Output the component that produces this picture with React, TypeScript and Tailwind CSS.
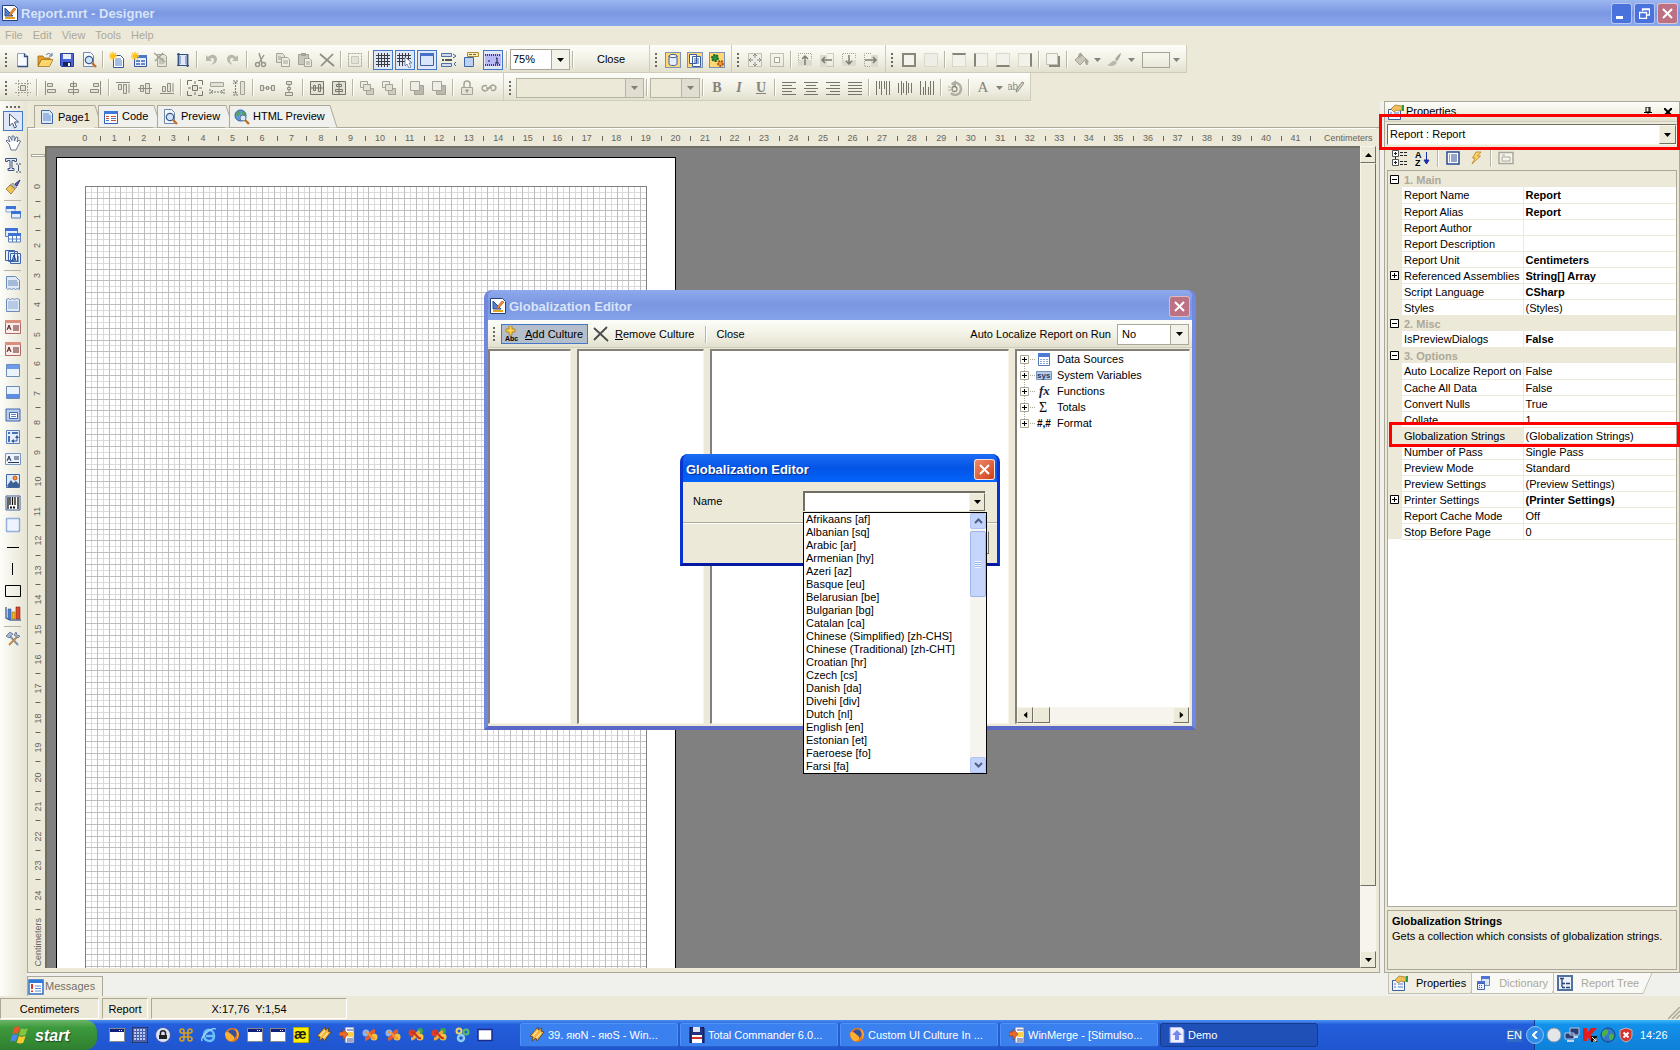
import React from "react";
import clsx from "clsx";

const G = "#a5a396";
const L = "#e4e2d6";
const B = "#3a5f9f";

// Small 16x16 drawings, keyed by command name
const icons: Record<string, React.ReactNode> = {
  app: (
    <>
      <path d="M0.5 0.5h12l3 3v12h-15z" fill="#fff" stroke="#26417a" />
      <path d="M3 3v8h8z" fill="#4f7fd0" stroke="#2a4d94" />
      <path d="M7 9l5-6 2 1-5 6-2 1z" fill="#f08a2c" stroke="#a3561b" strokeWidth=".6" />
      <path d="M3 13h10" stroke="#e6a21d" strokeWidth="2" />
    </>
  ),
  new: (
    <>
      <path d="M2.500 1.500h7l3 3v10h-10z" fill="#f7faff" stroke="#8fa3c4" />
      <path d="M9.500 1.500v3h3v10h-10" fill="none" stroke="#2f4f86" strokeWidth="1.300" />
    </>
  ),
  open: (
    <>
      <path d="M1 4h5l1 2h6v2H4L1 14z" fill="#e4a02c" stroke="#9c6a14" strokeWidth=".8" />
      <path d="M1 14.500L4.500 7.500H16L12.500 14.500z" fill="#ffd66b" stroke="#a8741a" strokeWidth=".8" />
      <path d="M9 3c2-2 4-2 5 0m1-2v3h-3" fill="none" stroke="#4a6d9c" />
    </>
  ),
  save: (
    <>
      <path d="M1.500 1.500h13v13h-12l-1-1z" fill="#4a63d8" stroke="#2b3f9a" />
      <path d="M4 2h8v5H4z" fill="#e8eefc" />
      <path d="M4 10h8v4H4z" fill="#16245c" />
      <path d="M9 11h2v3H9z" fill="#fff" />
    </>
  ),
  preview: (
    <>
      <path d="M2.500 .500h7l3 3v11h-10z" fill="#f4f8ff" stroke="#7187ad" />
      <circle cx="8" cy="8" r="3.700" fill="#cfe4f8" stroke="#3e5c86" strokeWidth="1.200" />
      <path d="M11 11l4 4" stroke="#c0702c" strokeWidth="2.400" />
    </>
  ),
  newPage: (
    <>
      <path d="M4.500 3.500h7l3 3v9h-10z" fill="#fff" stroke="#35569a" />
      <path d="M6 7h6M6 9h7M6 11h7M6 13h7" stroke="#4c7bc9" />
      <path d="M4 0v8M0 4h8M1 1l6 6M7 1L1 7" stroke="#ffc21a" strokeWidth="1.300" />
    </>
  ),
  newForm: (
    <>
      <path d="M3.500 3.500h12v11h-12z" fill="#e8f0ff" stroke="#35569a" />
      <path d="M3 3h13v3H3z" fill="#4a78cf" />
      <path d="M5 9h4M10 9h4M5 12h4M10 12h4" stroke="#3d66b3" strokeWidth="1.500" />
      <path d="M4 0v8M0 4h8M1 1l6 6M7 1L1 7" stroke="#ffc21a" strokeWidth="1.300" />
    </>
  ),
  delPage: (
    <>
      <path d="M4.500 2.500h7l2 2v10h-9z" fill={L} stroke={G} />
      <path d="M6 7h5M6 9h5M6 11h5" stroke={G} />
      <path d="M1 1l11 9M10 1L2 9" stroke={G} strokeWidth="1.500" />
    </>
  ),
  pageSetup: (
    <>
      <path d="M3 2h9v11H3z" fill="#dfe8f8" />
      <path d="M3.500 1v12M12.500 2v13" stroke="#34507f" strokeWidth="1.800" />
      <path d="M2 2.500h11M2 13.500h12" stroke="#34507f" />
      <path d="M5.500 4v8M10.500 4v8" stroke="#9db0d0" />
    </>
  ),
  undo: <path d="M3 3v6h6L7 7c2-2 4-1 4 1s-1 3-3 5c4-1 6-3 6-6 0-4-5-6-9-2z" fill="#bab8ac" />,
  redo: <path d="M13 3v6H7l2-2C7 5 5 6 5 8s1 3 3 5C4 12 2 10 2 7c0-4 5-6 9-2z" fill="#bab8ac" />,
  cut: (
    <>
      <path d="M6 1l3 10M11 3L6 11" stroke="#97958a" strokeWidth="1.400" />
      <circle cx="4.500" cy="12.500" r="2" fill="none" stroke="#97958a" strokeWidth="1.400" />
      <circle cx="10.500" cy="12.500" r="2" fill="none" stroke="#97958a" strokeWidth="1.400" />
    </>
  ),
  copy: (
    <>
      <path d="M1.500 1.500h6l2 2v7h-8z" fill={L} stroke={G} />
      <path d="M6.500 5.500h6l2 2v7h-8z" fill="#efeee6" stroke={G} />
      <path d="M8 9h5M8 11h5M3 5h3M3 7h3" stroke={G} />
    </>
  ),
  paste: (
    <>
      <path d="M1.500 2.500h10v10h-10z" fill="#c9c7bb" stroke={G} />
      <path d="M4 1h5v3H4z" fill={G} />
      <path d="M7.500 6.500h5l2 2v6h-7z" fill="#efeee6" stroke={G} />
      <path d="M9 10h4M9 12h4" stroke={G} />
    </>
  ),
  del: <path d="M1 2l14 12M14 2L2 14" stroke="#8f8d82" strokeWidth="1.700" />,
  cross: <path d="M1 2l14 13M14 1L1 14" stroke="#4a4a4a" strokeWidth="1.800" />,
  selectAll: (
    <>
      <path d="M1.500 1.500h13v13h-13z" fill="none" stroke={G} strokeDasharray="2 1" />
      <path d="M4.500 4.500h7v7h-7z" fill={L} stroke="#c9c7bb" />
    </>
  ),
  grid: <path d="M3.500 1v14M6.500 1v14M9.500 1v14M12.500 1v14M1 3.500h14M1 6.500h14M1 9.500h14M1 12.500h14" stroke="#3a3a42" />,
  snap: (
    <>
      <path d="M2.500 1v13M5.500 1v13M8.500 1v13M11.500 1v9M0 3.500h14M0 6.500h14M0 9.500h14" stroke="#3a3a42" />
      <path d="M8 5v9l2-2 2 4 2-1-2-4h3z" fill="#fff" stroke="#5d74a3" strokeWidth=".8" />
    </>
  ),
  headers: (
    <>
      <path d="M1.500 1.500h13v12h-13z" fill="#d9e6fa" stroke="#3f5f9c" />
      <path d="M1 1h14v3H1z" fill="#4472c8" />
    </>
  ),
  order: (
    <>
      <path d="M.500 1.500h10v3H.500zM.500 11.500h10v3H.500z" fill="#cfdcf2" stroke="#54709f" />
      <path d="M4 8h7M1 8h2" stroke="#222" strokeWidth="1.500" />
      <path d="M12 2l3 2-3 2M15 10l-2 2 2 2" fill="none" stroke={B} />
    </>
  ),
  quickInfo: (
    <>
      <path d="M1.500 5.500h9v9h-9z" fill="#bdd2f3" stroke="#3f66ab" />
      <path d="M4.500 .500h11v4h-11z" fill="#fff2b8" stroke="#a88a37" />
      <path d="M6 2.500h3M10 2.500h3" stroke="#7a6425" />
    </>
  ),
  rulers: (
    <>
      <path d="M0 2h16v12H0z" fill="#b9b9f5" />
      <path d="M0 3h16M0 13h16" stroke="#3a3a96" strokeDasharray="1 1" strokeWidth="2" />
      <path d="M11 6h1v5M10 11h4M3 9h2" stroke="#10103c" fill="none" />
    </>
  ),
  dictSource: (
    <>
      <path d="M0 0h16v16H0z" fill="#ffd873" stroke="#7b93b8" strokeWidth="2" />
      <path d="M4 4v8c0 2 8 2 8 0V4" fill="#e6eefb" stroke={B} />
      <ellipse cx="8" cy="4" rx="4" ry="1.600" fill="#fff" stroke={B} />
    </>
  ),
  dictPages: (
    <>
      <path d="M0 0h16v16H0z" fill="#ffd873" stroke="#7b93b8" strokeWidth="2" />
      <path d="M2.500 2.500h7v9h-7zM5.500 4.500h8v10h-8z" fill="#fff" stroke={B} />
      <path d="M7 7h5M7 9h5M7 11h5" stroke={B} />
    </>
  ),
  dictGears: (
    <>
      <path d="M0 0h16v16H0z" fill="#ffd873" stroke="#7b93b8" strokeWidth="2" />
      <circle cx="6" cy="6" r="3" fill="#2f8f3a" stroke="#1c6b27" strokeWidth="2" strokeDasharray="2 1" />
      <circle cx="11.500" cy="11.500" r="2.500" fill="#f29a2e" stroke="#b2591b" strokeWidth="2" strokeDasharray="2 1" />
    </>
  ),
  move: (
    <>
      <path d="M1.500 1.500h13v13h-13z" fill="#efeee6" stroke="#c3c1b5" />
      <path d="M8 2v4M6 4l2-2 2 2M8 10v4M6 12l2 2 2-2M2 8h4M4 6L2 8l2 2M10 8h4M12 6l2 2-2 2" fill="none" stroke="#8f8d82" />
    </>
  ),
  inner: (
    <>
      <path d="M1.500 1.500h13v13h-13z" fill="none" stroke="#8f8d82" strokeDasharray="1 1" />
      <path d="M5.500 5.500h5v5h-5z" fill="#fff" stroke={G} />
    </>
  ),
  toUp: (
    <>
      <path d="M1 8h14v6H1z" fill="#dddbcf" />
      <path d="M1.500 8V1.500h13V8" fill="none" stroke={G} strokeDasharray="1 1" />
      <path d="M8 13V4M5 7l3-3 3 3" fill="none" stroke="#7f7d72" strokeWidth="1.500" />
    </>
  ),
  toLeft: (
    <>
      <path d="M1 3h7v12H1z" fill="#dddbcf" />
      <path d="M8.500 1.500h6v13h-6" fill="none" stroke={G} strokeDasharray="1 1" />
      <path d="M13 8H3M6 5L3 8l3 3" fill="none" stroke="#7f7d72" strokeWidth="1.500" />
    </>
  ),
  toDown: (
    <>
      <path d="M1 8h14v6H1z" fill="#dddbcf" />
      <path d="M1.500 7V1.500h13V7" fill="none" stroke={G} strokeDasharray="1 1" />
      <path d="M8 3v9M5 9l3 3 3-3" fill="none" stroke="#7f7d72" strokeWidth="1.500" />
    </>
  ),
  toRight: (
    <>
      <path d="M8 3h7v12H8z" fill="#dddbcf" />
      <path d="M8 1.500H1.500v13H8" fill="none" stroke={G} strokeDasharray="1 1" />
      <path d="M2 8h11M10 5l3 3-3 3" fill="none" stroke="#7f7d72" strokeWidth="1.500" />
    </>
  ),
  borderAll: <path d="M2 2h12v12H2z" fill="#f4f3ec" stroke="#8a887c" strokeWidth="2" />,
  borderNone: <path d="M1.500 1.500h13v13h-13z" fill="#efeee6" stroke="#dad8cc" />,
  align: <path d="M1 2.500h14M1 5.500h10M1 8.500h14M1 11.500h10M1 14.500h14" stroke="#77756a" />,
  alignC: <path d="M1 2.500h14M3 5.500h10M1 8.500h14M3 11.500h10M1 14.500h14" stroke="#77756a" />,
  alignR: <path d="M1 2.500h14M5 5.500h10M1 8.500h14M5 11.500h10M1 14.500h14" stroke="#77756a" />,
  alignJ: <path d="M1 2.500h14M1 5.500h14M1 8.500h14M1 11.500h14M1 14.500h14" stroke="#77756a" />,
  vTop: <path d="M1.500 1v14M4.500 1v8M6.500 1v14M9.500 1v8M11.500 1v14M14.500 1v14" stroke="#77756a" />,
  vMid: <path d="M1.500 3v10M4.500 1v14M6.500 3v10M9.500 1v14M11.500 3v10M14.500 3v10" stroke="#77756a" />,
  vBot: <path d="M1.500 1v14M4.500 7v8M6.500 1v14M9.500 7v8M11.500 1v14M14.500 1v14" stroke="#77756a" />,
  alignGrid: (
    <>
      <path d="M3.500 0v16M12.500 0v16M0 3.500h16M0 12.500h16" stroke={G} strokeDasharray="2 1" />
      <path d="M5.500 5.500h5v5h-5z" fill={L} stroke="#8f8d82" />
    </>
  ),
  alLeft: <path d="M2.500 1v14M4.500 3.500h5v3h-5zM4.500 9.500h8v3h-8z" fill={L} stroke="#8f8d82" />,
  alCenter: <path d="M8.500 1v14M5.500 3.500h6v3h-6zM3.500 9.500h10v3h-10z" fill={L} stroke="#8f8d82" />,
  alRight: <path d="M13.500 1v14M6.500 3.500h5v3h-5zM3.500 9.500h8v3h-8z" fill={L} stroke="#8f8d82" />,
  alTop: <path d="M1 2.500h14M3.500 4.500h3v5h-3zM8.500 4.500h3v9h-3zM14 4v9" fill={L} stroke="#8f8d82" />,
  alMiddle: <path d="M1 8.500h14M3.500 5.500h3v6h-3zM8.500 3.500h4v10h-4z" fill={L} stroke="#8f8d82" />,
  alBottom: <path d="M1 13.500h14M3.500 6.500h3v5h-3zM8.500 3.500h3v8h-3zM14 3v9" fill={L} stroke="#8f8d82" />,
  sizeBoth: (
    <>
      <path d="M.500 5V.500H5M11 .500h4.500V5M15.500 11v4.500H11M5 15.500H.500V11M8 1v3M8 12v3M1 8h3M12 8h3" fill="none" stroke="#77756a" />
      <path d="M5.500 5.500h5v5h-5z" fill={L} stroke="#77756a" />
    </>
  ),
  sizeW: (
    <>
      <path d="M1.500 2.500h13v4h-13z" fill={L} stroke={G} />
      <path d="M1 9v5M15 9v5M2 12h12M4 10l-2 2 2 2M12 10l2 2-2 2" fill="none" stroke="#77756a" strokeDasharray="2 1" />
    </>
  ),
  sizeH: (
    <>
      <path d="M9.500 1.500h4v13h-4z" fill={L} stroke={G} />
      <path d="M2 1h5M2 15h5M4.500 2v12M2 4l2.500-2L7 4M2 12l2.500 2L7 12" fill="none" stroke="#77756a" strokeDasharray="2 1" />
    </>
  ),
  spaceH: <path d="M1.500 5.500h3v5h-3zM7.500 6.500h2v3h-2zM12.500 5.500h3v5h-3zM5 8h2M10 8h2" fill={L} stroke="#8f8d82" />,
  spaceV: <path d="M5.500 1.500h5v3h-5zM6.500 7.500h3v2h-3zM4.500 12.500h7v3h-7zM8 5v2M8 10v2" fill={L} stroke="#8f8d82" />,
  centerH: <path d="M1.500 1.500h13v13h-13zM1 8h14M4.500 5.500h2v5h-2zM9.500 4.500h2v7h-2z" fill={L} stroke="#77756a" />,
  centerV: <path d="M1.500 1.500h13v13h-13zM8 1v14M5.500 4.500h5v2h-5zM4.500 9.500h7v2h-7z" fill={L} stroke="#77756a" />,
  layers: (
    <>
      <path d="M1.500 1.500h7v6h-7z" fill="#efeee6" stroke={G} />
      <path d="M7.500 8.500h7v6h-7z" fill="#cfcdc1" stroke={G} />
      <path d="M4.500 4.500h7v6h-7z" fill={L} stroke={G} />
    </>
  ),
  layers2: (
    <>
      <path d="M5.500 5.500h9v9h-9z" fill="#bab8ac" stroke={G} />
      <path d="M1.500 1.500h9v9h-9z" fill="#efeee6" stroke={G} />
    </>
  ),
  lock: (
    <>
      <path d="M5 7V4c0-4 6-4 6 0v3" fill="none" stroke={G} strokeWidth="1.500" />
      <path d="M2.500 7.500h11v7h-11z" fill={L} stroke={G} />
      <path d="M8 9v4M6.500 10.500h3" stroke="#8f8d82" />
    </>
  ),
  link: <path d="M6 6c-5-2-7 4-2 5 2 0 4-3 4-3s2-3 4-3c5 1 3 7-2 5M5 8h6" fill="none" stroke={G} strokeWidth="1.500" />,
  shadow: (
    <>
      <path d="M4 4h11v11H4z" fill="#8a887c" />
      <path d="M1.500 1.500h11v11h-11z" fill="#f4f3ec" stroke="#c3c1b5" />
    </>
  ),
  bucket: (
    <>
      <path d="M2 8l6-6 5 5-6 6z" fill="#c9c7bb" stroke={G} />
      <path d="M6 6c-1-6 3-6 3-2M13 7c3 1 2 4 1 6-2-2-2-4-1-6z" fill="#aaa89c" stroke={G} />
    </>
  ),
  brushGray: (
    <>
      <path d="M15 1c-2 1-5 4-6 7l2 1c2-2 4-6 4-8z" fill="#aaa89c" />
      <path d="M9 9c-3-1-4 3-8 4 4 2 9 1 10-3z" fill="#bab8ac" />
    </>
  ),
  rotate: (
    <>
      <path d="M5 4c4-3 9 0 9 5s-6 8-10 4" fill="none" stroke="#b2b0a4" strokeWidth="2.500" />
      <path d="M9 0L4 4l5 4z" fill="#b2b0a4" />
      <circle cx="7.500" cy="9" r="2.500" fill="none" stroke="#8f8d82" strokeWidth="1.300" />
      <path d="M1 7h3M1 10h3" stroke="#b2b0a4" />
    </>
  ),
  abPen: (
    <>
      <text x="-1" y="10" fontSize="10" fontFamily="Liberation Sans" fill="#8f8d82">ab</text>
      <path d="M16 3l-6 8-2 1 1-3 5-7z" fill="#d6d4c8" stroke="#8f8d82" />
    </>
  ),
  bandData: (
    <>
      <path d="M1 2h9v5H1z" fill="#e4eefc" stroke="#8aa6d6" />
      <path d="M1 1h10v3H1zM6 6h10v3H6z" fill="#3d72d6" />
      <path d="M6.500 9v4h9V9" fill="#e4eefc" stroke="#5b7fbd" />
    </>
  ),
  bandTable: (
    <>
      <path d="M.500 1.500h12v8H.500z" fill="#e4eefc" stroke="#5b7fbd" />
      <path d="M0 1h13v3H0zM3 6h13v3H3z" fill="#3d72d6" />
      <path d="M3.500 9v6h12V9M7.500 9v6M11.500 9v6M3 12h13" fill="#fff" stroke="#5b7fbd" />
    </>
  ),
  bandA: (
    <>
      <path d="M.500 1.500h9v10h-9zM3.500 2.500h9v10h-9zM5.500 4.500h10v10h-10z" fill="#e4eefc" stroke="#3f66ab" />
      <path d="M7 12l2-6 2 6M8 10h2M12 8h2M12 10h2M12 12h2" stroke="#244b91" fill="none" />
    </>
  ),
  pageTitle: (
    <>
      <path d="M1.500 1.500h9l4 4v9l-2-1-2 1-2-1-2 1-2-1-2 1-1-1z" fill="#dfe9f8" stroke="#6d8bb8" />
      <path d="M3 6h9M3 8h10M3 10h10" stroke="#6d8bb8" />
    </>
  ),
  pageSum: (
    <>
      <path d="M1.500 2.500l2-1 2 1 2-1 2 1 2-1 3 1v12h-13z" fill="#dfe9f8" stroke="#6d8bb8" />
      <path d="M3 5h10M3 7h10M3 9h10M3 11h10" stroke="#8fa9d0" />
    </>
  ),
  redBand: (
    <>
      <path d="M.500 1.500h15v13H.500z" fill="#fbeceb" stroke="#b06a62" />
      <path d="M0 1h16v3H0z" fill="#d98f7e" />
      <path d="M2 11l2-5 2 5M3 9h2M8 7h6M8 9h6M8 11h6" stroke="#5a2420" fill="none" />
    </>
  ),
  winTop: (
    <>
      <path d="M1.500 1.500h13v12h-13z" fill="#eaf2fd" stroke="#6d8bb8" />
      <path d="M2 2h12v4H2z" fill="#6c9cea" />
    </>
  ),
  winBottom: (
    <>
      <path d="M1.500 1.500h13v12h-13z" fill="#eaf2fd" stroke="#6d8bb8" />
      <path d="M2 9h12v4H2z" fill="#5c8ee6" />
    </>
  ),
  winList: (
    <>
      <path d="M1 2h14v12H1z" fill="#b9cdec" stroke="#3f66ab" />
      <path d="M4.500 5.500h8v6h-8z" fill="#fff" stroke="#3f66ab" />
      <path d="M6 7.500h5M6 9.500h5" stroke="#5b7fbd" />
    </>
  ),
  crossTab: (
    <>
      <path d="M1.500 1.500h13v13h-13z" fill="#e4eefc" stroke="#5b7fbd" />
      <path d="M3 3h2v2H3zM7 3h6v2H7zM3 7h2v6H3z" fill="#4472b8" />
      <path d="M8 12h4V8" stroke="#33558f" fill="none" />
      <path d="M6 12l3-2v4zM12 6l-2 3h4z" fill="#33558f" />
    </>
  ),
  textBox: (
    <>
      <path d="M.500 2.500h15v11H.500z" fill="#eef4fd" stroke="#7e97c0" />
      <path d="M2 10l2-5 2 5M3 8h2M9 6h5M9 8h5M3 11.500h11" stroke="#26385c" fill="none" />
    </>
  ),
  image: (
    <>
      <path d="M1.500 1.500h13v13h-13z" fill="#dcebfb" stroke="#4466a0" />
      <circle cx="10" cy="5" r="2" fill="#f09a3c" stroke="#c2571f" />
      <path d="M2 13l4-6 4 6zM8 10l3-2 3 3v3H2z" fill="#3d5f97" />
    </>
  ),
  barcode: (
    <>
      <path d="M1 1h14v14H1z" fill="#fff" stroke="#3d5f97" />
      <path d="M3 2v12M5 2v8M7.500 2v8M10 2v8M13 2v12" stroke="#111" strokeWidth="1.300" />
      <path d="M5 12.500h6" stroke="#111" strokeWidth="2" strokeDasharray="2 1" />
    </>
  ),
  dashBox: <path d="M1.500 1.500h13v13h-13z" fill="#edf4fe" stroke="#3d6bc4" strokeDasharray="1 1" strokeWidth="1.500" />,
  hLine: <path d="M2 8.500h12" stroke="#000" />,
  vLine: <path d="M7.500 2v12" stroke="#000" />,
  rect: <path d="M.500 2.500h15v11H.500z" fill="none" stroke="#000" />,
  chart: (
    <>
      <path d="M1 2v11l4 2h11" fill="none" stroke="#5470a0" strokeWidth="1.500" />
      <path d="M3 4h3v10H3z" fill="#4a83d8" stroke="#2b549b" strokeWidth=".6" />
      <path d="M7 7h3v7H7z" fill="#f3b62b" stroke="#9d6c10" strokeWidth=".6" />
      <path d="M11 2h4v12h-4z" fill="#d84a2c" stroke="#8c2411" strokeWidth=".6" />
    </>
  ),
  tools: (
    <>
      <path d="M3 3l10 11" stroke="#7e93b5" strokeWidth="2" />
      <path d="M13 5L4 14" stroke="#c08a48" strokeWidth="2" />
      <path d="M1 5l4-4 3 2-4 4zM11 1l1 3 3 1-2 2-4-3z" fill="#a9b8d0" stroke="#4f6388" strokeWidth=".7" />
    </>
  ),
  arrow: <path d="M4.500 1v12l3-3 2 5 2-1-2-5h4z" fill="#fff" stroke="#3f5680" />,
  hand: <path d="M4 9L1 6l1-1 3 2-2-5 2-.500 2 4V1h2l.500 5L11 2l2 .500L12 7l2-2 1.500 1L13 11l-2 4H6z" fill="#fff" stroke="#3f5680" strokeWidth=".8" />,
  textTool: <path d="M.500 1.500h11v3h-2v-1H7v8h2v2H3v-2h2v-8H2.500v1h-2zM11 7h2m1 0h2M11 15h2m1 0h2M13.500 8v6" fill="#e3ebf8" stroke="#3f5680" />,
  brush: (
    <>
      <path d="M15 1l-5 4 2 2z" fill="#5d5fb0" stroke="#33367c" />
      <path d="M8 4l4 4-2 2-5-4z" fill="#aeb3bd" stroke="#6a6f7c" strokeWidth=".6" />
      <path d="M5 6l5 4-4 5-5-5z" fill="#ecc45a" stroke="#99742a" strokeWidth=".8" />
    </>
  ),
  page: (
    <>
      <path d="M2.500 1.500h8l3 3v10h-11z" fill="#dce9fb" stroke="#3f66ab" />
      <path d="M4 5h6M4 7h8M4 9h8M4 11h8" stroke="#5c86cb" />
    </>
  ),
  code: (
    <>
      <path d="M1.500 2.500h13v12h-13z" fill="#fff" stroke="#3263b8" />
      <path d="M1 2h14v3H1z" fill="#3f78d8" />
      <path d="M3 7.500h3M8 7.500h5M3 9.500h3M8 11.500h5" stroke="#d24a3c" />
      <path d="M8 9.500h5M3 11.500h3" stroke="#3f78d8" />
    </>
  ),
  htmlPreview: (
    <>
      <circle cx="6.500" cy="6.500" r="5.500" fill="#5c9be0" stroke="#2b5a9c" />
      <path d="M3 3c3-2 4 0 3 2s-3 1-4 3M8 2c3 1 4 3 3 5s-3-1-3-5z" fill="#54a84a" />
      <circle cx="9" cy="9" r="3" fill="#d8eafa" stroke="#5f7392" />
      <path d="M11 11l4 4" stroke="#c0702c" strokeWidth="2.400" />
    </>
  ),
  properties: (
    <>
      <path d="M.500 5.500h12v10H.500z" fill="#f2f6fd" stroke="#3f5f9c" />
      <path d="M2 9h2M2 12h2M6 9h5M6 12h5" stroke="#5b7fbd" />
      <path d="M3 5l4-4 7 1v4l-3 1-2-1-3 2z" fill="#f0bf5b" stroke="#99702a" strokeWidth=".7" />
      <path d="M14 1h2v6h-2z" fill="#2f9a48" />
    </>
  ),
  dictionary: (
    <>
      <path d="M6.500 1.500h8v9h-8z" fill="#dce6fb" stroke="#6d86c4" />
      <path d="M6 1h9v3H6zM2 6h8v3H2z" fill="#4d74d4" />
      <path d="M2.500 8.500h7v6h-7z" fill="#eaf0fc" stroke="#4561a6" />
      <path d="M4 10.500h4M4 12.500h4" stroke="#4561a6" strokeDasharray="1 1" />
    </>
  ),
  reportTree: (
    <>
      <path d="M1 1h14v14H1z" fill="#eaf1fa" stroke="#52719f" strokeWidth="2" />
      <path d="M3 3.500h4M5 4v8M5 8.500h3M5 12.500h3M9 8.500h4M9 12.500h4" stroke="#2a4271" strokeWidth="1.300" fill="none" />
    </>
  ),
  messages: (
    <>
      <path d="M1 1h14v14H1z" fill="#fff" stroke="#2f6fc4" strokeWidth="1.500" />
      <path d="M1 1h14v3H1z" fill="#2f79dc" />
      <path d="M4 5v5M4 11.500v1.500" stroke="#d8392b" strokeWidth="2" />
      <path d="M7 7h6M7 9.500h6M7 12h6" stroke="#5a8ad4" />
    </>
  ),
  addCulture: (
    <>
      <path d="M4 0h3v3h3v3H7v3H4V6H1V3h3z" fill="#ffd04a" stroke="#a97a17" strokeWidth=".8" />
      <text x="0" y="15" fontSize="7" fontWeight="bold" fontFamily="Liberation Sans">Abc</text>
    </>
  ),
  categories: (
    <>
      <path d="M.500 .500h6v6h-6zM.500 9.500h6v6h-6z" fill="#fff" stroke="#555" />
      <path d="M2 3.500h3M2 12.500h3M3.500 11v3M3.500 2v3M8 2.500h3M8 5.500h3M8 11.500h3M8 14.500h3M12 2.500h3M12 5.500h3M12 11.500h3M12 14.500h3M3.500 7v2" stroke="#222" />
    </>
  ),
  sortAz: (
    <>
      <text x="0" y="8" fontSize="9" fontWeight="bold" fontFamily="Liberation Sans">A</text>
      <text x="0" y="16" fontSize="9" fontWeight="bold" fontFamily="Liberation Sans">Z</text>
      <path d="M11.500 2v10M9 10l2.500 4L14 10z" stroke="#1a2fa5" fill="#1a2fa5" />
    </>
  ),
  list: (
    <>
      <path d="M2 2h12v12H2z" fill="#fff" stroke="#2a4a98" strokeWidth="1.500" />
      <path d="M4 5h1M4 7h1M4 9h1M4 11h1M6 5h6M6 7h6M6 9h6M6 11h6" stroke="#2a4a98" />
    </>
  ),
  bolt: <path d="M8 2h5L9.500 6h3L4 14l3-6H4.500z" fill="#ffd25c" stroke="#b5812a" strokeWidth=".8" />,
  propPage: (
    <>
      <path d="M1 2.500h14v11H1z" fill="#f4f3ec" stroke="#aca899" strokeWidth="1.500" />
      <path d="M4 7h8v4H4zM4 5h3" stroke="#aca899" fill="none" />
    </>
  ),
  table: (
    <>
      <path d="M2.500 2.500h11v12h-11z" fill="#fff" stroke="#5878b2" />
      <path d="M2 2h12v4H2z" fill="#4b7cd2" />
      <path d="M4 8.500h9M4 10.500h9M4 12.500h9" stroke="#88a7dc" strokeDasharray="2 1" />
    </>
  ),
  sys: (
    <>
      <path d="M.500 4.500h15v8H.500z" fill="#b5cbea" stroke="#7a94bb" />
      <text x="1" y="11" fontSize="8" fontWeight="bold" fontFamily="Liberation Sans" fill="#29395c">sys</text>
    </>
  ),
  fx: <text x="3" y="12" fontSize="13" fontWeight="bold" fontStyle="italic" fontFamily="Liberation Serif" fill="#1c2340">fx</text>,
  sigma: <text x="3" y="13" fontSize="14" fontFamily="Liberation Serif">Σ</text>,
  format: <text x="1" y="12" fontSize="10" fontFamily="Liberation Sans" fontWeight="bold">#,#</text>,
  winBox: (
    <>
      <path d="M0 1h16v14H0z" fill="#8a8a8a" />
      <path d="M1 2h14v12H1z" fill="#fff" />
      <path d="M1 2h14v3H1z" fill="#10207a" />
      <path d="M10 3.500h4" stroke="#fff" strokeDasharray="1 1" />
    </>
  ),
  blueDots: (
    <>
      <path d="M0 0h16v16H0z" fill="#4a62ad" stroke="#0a1236" />
      <path d="M2 3h12M2 6h12M2 9h12M2 12h12" stroke="#b9c6f2" strokeDasharray="2 1" strokeWidth="2" />
    </>
  ),
  padlock: (
    <>
      <circle cx="8" cy="8" r="7.500" fill="#dce3f6" stroke="#4257a8" />
      <path d="M5.500 8V6c0-3 5-3 5 0v2" fill="none" stroke="#222" strokeWidth="1.500" />
      <path d="M4 8h8v4H4z" fill="#222" />
    </>
  ),
  clover: (
    <path
      d="M6 6h4v4H6zM6 6V4a2 2 0 1 0-2 2zM10 6h2a2 2 0 1 0-2-2zM6 10H4a2 2 0 1 0 2 2zM10 10v2a2 2 0 1 0 2-2z"
      fill="none"
      stroke="#d9a01e"
      strokeWidth="1.600"
    />
  ),
  ie: (
    <>
      <path d="M13 10c-1 6-10 5-10-2s10-7 10 1H5" fill="none" stroke="#6cc1fa" strokeWidth="2.500" />
      <path d="M1 14C-1 10 10 0 15 2" fill="none" stroke="#a5dcff" strokeWidth="1.200" />
    </>
  ),
  firefox: (
    <>
      <circle cx="8" cy="8" r="7" fill="#e8781e" />
      <circle cx="8" cy="7" r="4.500" fill="#35509e" />
      <path d="M1 6c2-2 4-1 6 1s4 2 3 5-8 4-9-6zM11 1c4 2 5 8 2 11 1-4 0-8-2-11z" fill="#ffb02e" />
    </>
  ),
  ae: (
    <>
      <path d="M0 0h16v16H0z" fill="#ffee00" stroke="#7c7400" />
      <text x="1" y="12" fontSize="14" fontWeight="bold" fontFamily="Liberation Sans" fill="#16201a">æ</text>
    </>
  ),
  winamp: (
    <>
      <path d="M9 0L1 9l3 1-1 4 4-3 1 3 7-9-3-1 1-3-4 2z" fill="#f5b53c" stroke="#5c3f14" strokeWidth=".8" />
      <path d="M9 3L4 9M12 6l-5 5" stroke="#ffe2a0" strokeWidth="1.300" />
    </>
  ),
  merge: (
    <>
      <path d="M6 0h9v16H6z" fill="#f3f6ff" stroke="#5a6faa" />
      <path d="M8 3h6M8 12h6M8 14h6" stroke="#44528a" />
      <path d="M8 5h7v5H8z" fill="#ffd24a" />
      <path d="M0 5h4V2l5 5-5 6V9H0z" fill="#e86a28" stroke="#8f3410" strokeWidth=".6" />
    </>
  ),
  vsA: (
    <>
      <circle cx="4" cy="6" r="3.500" fill="#8cb4f0" />
      <circle cx="12" cy="10" r="3.500" fill="#f5c33c" />
      <path d="M3 12c3 0 4-2 5-4s2-4 5-4" fill="none" stroke="#e85b2a" strokeWidth="3.500" />
      <path d="M3 5c3 0 4 2 5 3s2 4 5 3" fill="none" stroke="#f0973a" strokeWidth="2" />
    </>
  ),
  vsB: (
    <>
      <circle cx="4" cy="6" r="3.500" fill="#d8402a" />
      <circle cx="12" cy="10" r="3.500" fill="#f5c33c" />
      <circle cx="12" cy="4" r="3" fill="#3ea54a" />
      <path d="M3 12c3 0 4-2 5-4s2-3 4-3" fill="none" stroke="#f2a93a" strokeWidth="3" />
      <path d="M3 5c3 0 4 2 5 3s2 4 5 3" fill="none" stroke="#c83222" strokeWidth="2" />
    </>
  ),
  cogs: (
    <>
      <circle cx="5" cy="4" r="2.500" fill="none" stroke="#ecd267" strokeWidth="2" />
      <circle cx="12" cy="5" r="2.500" fill="none" stroke="#5bbf62" strokeWidth="2" />
      <circle cx="7" cy="11" r="3" fill="none" stroke="#8ecbf2" strokeWidth="2.500" />
    </>
  ),
  blank: <path d="M1 2.500h14v11H1z" fill="#fff" stroke="#1d2a8b" strokeWidth="1.500" />,
  floppy: (
    <>
      <path d="M1 0h13l1 1v15H1z" fill="#23307e" stroke="#0b123c" />
      <path d="M4 0h7v5H4z" fill="#dfe4f2" />
      <path d="M3 8h10v8H3z" fill="#fff" />
      <path d="M3 11h10" stroke="#d3332c" strokeWidth="2" />
    </>
  ),
  demo: (
    <>
      <path d="M1 0h11l3 3v13H1z" fill="#eef0ff" stroke="#7d8ade" />
      <path d="M8 3l5 5h-3v5H6V8H3z" fill="#7488ec" />
    </>
  ),
  ball: <circle cx="8" cy="8" r="7" fill="#e4e7ea" stroke="#8c959e" />,
  network: (
    <>
      <path d="M6 1h9v7H6zM1 6h9v6H1z" fill="#2a3a72" stroke="#b9c6e6" />
      <path d="M3 14h7M10 10h4" stroke="#c9d3ea" strokeWidth="2" />
    </>
  ),
  kav: (
    <>
      <path d="M1 1h4v5l4-5h6L9 8l5 6H9l-4-4v4H1z" fill="#e11c1c" />
      <path d="M9 9h6v6H9z" fill="#111" />
      <path d="M10 10l4 4M14 11v3h-3" stroke="#fff" fill="none" />
    </>
  ),
  globe: (
    <>
      <circle cx="8" cy="8" r="7" fill="#3277cc" stroke="#173f7a" />
      <path d="M3 4c3-3 6-1 5 2S4 8 4 11C2 10 1 6 3 4zM10 7c4-1 5 2 2 6-3 1-4-4-2-6z" fill="#4eb04b" />
    </>
  ),
  shield: (
    <>
      <path d="M8 1l6 2v5c0 4-3 6-6 7-3-1-6-3-6-7V3z" fill="#d8322c" stroke="#b9b9c4" />
      <path d="M5.500 5.500l5 5M10.500 5.500l-5 5" stroke="#fff" strokeWidth="2" />
    </>
  ),
};

const Icon = ({ name, className }: { name: string; className?: string }) => (
  <svg viewBox="0 0 16 16" className={clsx("h-4 w-4 shrink-0", className)} aria-hidden="true">
    {icons[name]}
  </svg>
);

const BAR = "bg-gradient-to-b from-[#fdfdf9] via-[#f3f2e7] to-[#e2e1cf]";

const Down = ({ className }: { className?: string }) => (
  <svg viewBox="0 0 7 4" className={clsx("h-1 w-[7px] shrink-0", className)} aria-hidden="true">
    <path d="M0 0h7L3.500 4z" fill="currentColor" />
  </svg>
);

const Grip = () => (
  <div className="flex w-3 shrink-0 flex-col items-center justify-center gap-[2px]">
    {[0, 1, 2, 3].map((i) => (
      <span key={i} className="h-[2px] w-[2px] bg-[#6b6a62]" />
    ))}
  </div>
);

const Sep = () => (
  <div className="flex w-[6px] shrink-0 items-center justify-center">
    <span className="h-[17px] w-[2px] border-r border-white bg-[#b7b5a8]" />
  </div>
);

const Tool = ({ name, active, children }: { name: string; active?: boolean; children?: React.ReactNode }) => (
  <button
    type="button"
    aria-label={name}
    className={clsx(
      "mx-px flex h-[20px] w-[20px] shrink-0 items-center justify-center self-center",
      active && "border border-[#4577c9] bg-[#e0e7f6]"
    )}
  >
    {children ?? <Icon name={name} />}
  </button>
);

// Toolbar contents as a list of names, "|" stands for a separator
const Tools = ({ items, active = [] }: { items: string; active?: string[] }) => (
  <>
    {items.split(" ").map((item, i) =>
      item === "|" ? <Sep key={i} /> : <Tool key={i} name={item} active={active.includes(item)} />
    )}
  </>
);

const Toolbar = ({ children, className }: { children: React.ReactNode; className?: string }) => (
  <div
    role="toolbar"
    className={clsx("flex h-7 shrink-0 border-r border-b border-[#cfccbb] pt-[2px] pr-[3px]", BAR, className)}
  >
    <Grip />
    {children}
  </div>
);

const Combo = ({
  label,
  value,
  className,
  disabled,
}: {
  label: string;
  value: string;
  className?: string;
  disabled?: boolean;
}) => (
  <div
    className={clsx(
      "relative flex shrink-0 self-center border",
      disabled ? "border-[#b5b2a2] bg-[#ece9d8] text-[#7f7d72]" : "border-[#aca899] bg-white",
      className
    )}
  >
    <select aria-label={label} disabled={disabled} className="min-w-0 flex-1 appearance-none bg-transparent pl-[2px] outline-none">
      <option>{value}</option>
    </select>
    <span
      className={clsx(
        "pointer-events-none flex w-[18px] items-center justify-center border-l",
        disabled ? "border-[#b5b2a2] bg-[#e1ddd0]" : "border-[#aca899] bg-[#f3f2e9]"
      )}
    >
      <Down />
    </span>
  </div>
);

const BEVEL = "border border-t-[#f7f5ea] border-l-[#f7f5ea] border-r-[#716f64] border-b-[#716f64] bg-[#ece9d8]";

const edge: Record<string, string> = {
  top: "border-t-[#85837a] border-t-2",
  left: "border-l-[#85837a] border-l-2",
  bottom: "border-b-[#85837a] border-b-2",
  right: "border-r-[#85837a] border-r-2",
};

const TopBars = () => (
  <>
    <div className="flex h-7">
      <Toolbar>
        <Tools
          items="new open save preview | newPage newForm delPage pageSetup | undo redo | cut copy paste del | selectAll | grid snap headers order quickInfo rulers |"
          active={["grid", "snap", "headers", "rulers"]}
        />
        <Combo label="Zoom" value="75%" className="h-[21px] w-[60px]" />
        <Sep />
        <button type="button" className="w-[70px]">Close</button>
      </Toolbar>
      <Toolbar>
        <Tools items="dictSource dictPages dictGears" />
      </Toolbar>
      <Toolbar>
        <Tools items="move inner | toUp toLeft toDown toRight" />
      </Toolbar>
      <Toolbar className="text-[#85837a]">
        <Tools items="borderAll borderNone |" />
        {["top", "left", "bottom", "right"].map((side) => (
          <Tool key={side} name={side}>
            <span className={clsx("h-[14px] w-[14px] border border-[#dad8cc] bg-[#f2f1ea]", edge[side])} />
          </Tool>
        ))}
        <Tools items="| shadow | bucket" />
        <Down className="mx-[2px] self-center" />
        <Tool name="brushGray" />
        <Down className="mx-[3px] self-center" />
        <span className="ml-1 h-4 w-7 self-center border border-[#a5a396]" />
        <Down className="mx-[3px] self-center" />
      </Toolbar>
    </div>
    <div className="flex h-7">
      <Toolbar>
        <Tools items="alignGrid | alLeft alCenter alRight | alTop alMiddle alBottom | sizeBoth sizeW sizeH | spaceH spaceV | centerH centerV | layers layers | layers2 layers2 | lock link" />
      </Toolbar>
      <Toolbar className="text-[#85837a]">
        <Combo label="Font" value="" disabled className="h-[20px] w-32" />
        <Sep />
        <Combo label="Font size" value="" disabled className="h-[20px] w-[50px]" />
        <Sep />
        <button type="button" className="w-[22px] font-['Liberation_Serif'] text-[14px] font-bold">B</button>
        <button type="button" className="w-[22px] font-['Liberation_Serif'] text-[14px] font-bold italic">I</button>
        <button type="button" className="w-[22px] font-['Liberation_Serif'] text-[14px] font-bold underline">U</button>
        <Tools items="| align alignC alignR alignJ | vTop vMid vBot | rotate |" />
        <button type="button" className="w-[22px] font-['Liberation_Serif'] text-[15px]">A</button>
        <Down className="mx-[2px] self-center" />
        <Tool name="abPen" />
      </Toolbar>
    </div>
  </>
);

const toolbox = [
  ["arrow", "hand", "textTool", "brush"],
  ["bandData", "bandTable", "bandA"],
  [
    "pageTitle", "pageSum", "redBand", "redBand", "winTop", "winBottom", "winList", "crossTab",
    "textBox", "image", "barcode", "dashBox", "hLine", "vLine", "rect", "chart",
  ],
  ["tools"],
];

const Toolbox = () => (
  <div className="flex w-[27px] shrink-0 flex-col bg-gradient-to-r from-[#fdfdf9] to-[#e6e4d3] pt-[5px] pr-[2px]">
    <div className="mb-[2px] flex h-[2px] justify-center gap-[2px]">
      {[0, 1, 2, 3].map((i) => (
        <span key={i} className="h-[2px] w-[2px] bg-[#6b6a62]" />
      ))}
    </div>
    {toolbox.map((group, g) => (
      <React.Fragment key={g}>
        {g > 0 && (
          <div className="flex h-1 items-center px-1">
            <span className="h-px w-full bg-[#b7b5a8]" />
          </div>
        )}
        {group.map((name, i) => (
          <div key={i} className="flex h-[22px] justify-center">
            <Tool name={name} active={name === "arrow"} />
          </div>
        ))}
      </React.Fragment>
    ))}
  </div>
);

const DocTab = ({ icon, label, active, width }: { icon: string; label: string; active?: boolean; width: string }) => (
  <button type="button" role="tab" aria-selected={!!active} className="-mr-[4px] flex h-[23px]">
    <span
      className={clsx(
        "flex h-full items-center gap-[3px] border-t border-l border-[#aca899] pl-1",
        active ? "bg-[#ece9d8]" : "border-b bg-[#f0f0ec]",
        width
      )}
    >
      <Icon name={icon} />
      {label}
    </span>
    <svg viewBox="0 0 8 23" className="h-[23px] w-2" aria-hidden="true">
      <path d="M0 .500h1L8 22.500H0z" fill={active ? "#ece9d8" : "#f0f0ec"} />
      <path d="M0 .500h1L8 22.500" fill="none" stroke="#aca899" />
    </svg>
  </button>
);

const CM = 29.53;

const PageGrid = () => {
  const xs = Array.from({ length: 96 }, (_, i) => Math.round((i * CM) / 5));
  const ys = Array.from({ length: 136 }, (_, i) => Math.round((i * CM) / 5));
  return (
    <svg width="562" height="800" shapeRendering="crispEdges" aria-hidden="true">
      {xs.map((x, i) => i % 2 === 1 && <path key={x} d={`M${x + 0.5} 0v800`} stroke="#dcdcdc" />)}
      {ys.map((y, i) => i % 2 === 1 && <path key={y} d={`M0 ${y + 0.5}h561`} stroke="#dcdcdc" />)}
      {xs.map((x, i) => i % 2 === 0 && <path key={x} d={`M${x + 0.5} 0v800`} stroke="#bdbdbd" />)}
      {ys.map((y, i) => i % 2 === 0 && <path key={y} d={`M0 ${y + 0.5}h561`} stroke="#bdbdbd" />)}
      <path d="M.500 800V.500h561V800" fill="none" stroke="#808080" />
    </svg>
  );
};

const Canvas = () => (
  <div className="flex min-h-0 flex-1 flex-col border border-[#aca899] pr-[3px] pb-1 text-[9px] text-[#66645c]">
    <div className="flex h-[18px] shrink-0 items-center border-t border-white pt-[2px] pl-[42px]">
      <div className="flex w-[1240px] shrink-0">
        {Array.from({ length: 42 }, (_, i) => (
          <span key={i} className="relative flex-1 text-center">
            {i}
            <i className="absolute top-1 -right-px h-[5px] w-px bg-[#66645c]" />
          </span>
        ))}
      </div>
      <span className="ml-[14px]">Centimeters</span>
    </div>
    <div className="flex min-h-0 flex-1">
      <div className="flex w-[17px] shrink-0 flex-col items-center overflow-hidden pl-[3px]">
        <span className="mt-2 h-[3px] w-[14px] shrink-0 border border-[#aca899] bg-white" />
        <div className="mt-[15px] flex h-[738px] shrink-0 flex-col">
          {Array.from({ length: 25 }, (_, i) => (
            <span key={i} className="relative flex flex-1 items-center justify-center">
              <span className="-rotate-90">{i}</span>
              <i className="absolute bottom-0 left-1/2 h-px w-[5px] -translate-x-1/2 bg-[#66645c]" />
            </span>
          ))}
        </div>
        <span className="mt-2 rotate-180 [writing-mode:vertical-rl]">Centimeters</span>
      </div>
      <div className="flex min-w-0 flex-1 overflow-hidden border-t-2 border-l-2 border-[#716f64] bg-[#808080] pt-[9px] pl-[9px]">
        <div className="w-[620px] shrink-0 overflow-hidden border border-b-0 border-black bg-white pt-7 pl-7">
          <PageGrid />
        </div>
      </div>
      <div className="flex w-4 shrink-0 flex-col bg-[#f6f4ec] text-black">
        <button type="button" aria-label="Scroll up" className={clsx("flex h-[17px] items-center justify-center", BEVEL)}>
          <Down className="rotate-180" />
        </button>
        <div className={clsx("h-[723px]", BEVEL)} />
        <div className="flex-1" />
        <button type="button" aria-label="Scroll down" className={clsx("flex h-[17px] items-center justify-center", BEVEL)}>
          <Down />
        </button>
      </div>
    </div>
  </div>
);

type Prop = { name: string; value?: string; bold?: boolean; expand?: boolean; selected?: boolean };

const groups: { title: string; rows: Prop[] }[] = [
  {
    title: "1. Main",
    rows: [
      { name: "Report Name", value: "Report", bold: true },
      { name: "Report Alias", value: "Report", bold: true },
      { name: "Report Author" },
      { name: "Report Description" },
      { name: "Report Unit", value: "Centimeters", bold: true },
      { name: "Referenced Assemblies", value: "String[] Array", bold: true, expand: true },
      { name: "Script Language", value: "CSharp", bold: true },
      { name: "Styles", value: "(Styles)" },
    ],
  },
  { title: "2. Misc", rows: [{ name: "IsPreviewDialogs", value: "False", bold: true }] },
  {
    title: "3. Options",
    rows: [
      { name: "Auto Localize Report on", value: "False" },
      { name: "Cache All Data", value: "False" },
      { name: "Convert Nulls", value: "True" },
      { name: "Collate", value: "1" },
      { name: "Globalization Strings", value: "(Globalization Strings)", selected: true },
      { name: "Number of Pass", value: "Single Pass" },
      { name: "Preview Mode", value: "Standard" },
      { name: "Preview Settings", value: "(Preview Settings)" },
      { name: "Printer Settings", value: "(Printer Settings)", bold: true, expand: true },
      { name: "Report Cache Mode", value: "Off" },
      { name: "Stop Before Page", value: "0" },
    ],
  },
];

const Expander = ({ plus, className }: { plus?: boolean; className?: string }) => (
  <svg viewBox="0 0 9 9" className={clsx("h-[9px] w-[9px] shrink-0", className)} aria-hidden="true">
    <path d="M.500 .500h8v8h-8z" fill="#fff" stroke="currentColor" />
    <path d={plus ? "M2 4.500h5M4.500 2v5" : "M2 4.500h5"} stroke="#000" />
  </svg>
);

const PropertyTable = () => (
  <table className="w-full table-fixed border-collapse">
    <colgroup>
      <col className="w-[14px]" />
      <col className="w-[121px]" />
      <col />
    </colgroup>
    <tbody>
      {groups.map((group) => (
        <React.Fragment key={group.title}>
          <tr className="h-4 bg-[#ece9d8]">
            <td className="p-0 pl-[2px]">
              <Expander />
            </td>
            <th colSpan={2} className="p-0 pt-[2px] pl-[2px] text-left font-bold text-[#aca899]">
              {group.title}
            </th>
          </tr>
          {group.rows.map((row) => (
            <tr key={row.name} className="h-4">
              <td className="bg-[#ece9d8] p-0 pl-[2px]">{row.expand && <Expander plus />}</td>
              <td
                className={clsx(
                  "overflow-hidden border-r border-b border-[#ece9d8] p-0 pt-[2px] pl-[2px] whitespace-nowrap",
                  row.selected && "bg-[#ece9d8]"
                )}
              >
                {row.name}
              </td>
              <td
                className={clsx(
                  "border-b border-[#ece9d8] p-0 pt-[2px] pl-[2px] whitespace-nowrap",
                  row.bold && "font-bold"
                )}
              >
                {row.value}
              </td>
            </tr>
          ))}
        </React.Fragment>
      ))}
    </tbody>
  </table>
);

const PanelTab = ({ icon, label, active }: { icon: string; label: string; active?: boolean }) => (
  <button type="button" role="tab" aria-selected={!!active} className="-mr-[9px] flex h-[21px]">
    <span
      className={clsx(
        "flex h-full items-center gap-2 border-b border-l border-[#c5c2b3] pl-[3px]",
        active ? "relative bg-[#f1efe4] text-black" : "bg-[#f8f8f4] pl-1 text-[#aca899]"
      )}
    >
      <Icon name={icon} />
      {label}
    </span>
    <svg viewBox="0 0 14 21" className="h-[21px] w-[14px]" aria-hidden="true">
      <path d="M0 20.500h4L13 0H0z" fill={active ? "#f1efe4" : "#f8f8f4"} />
      <path d="M0 20.500h4L13 0" fill="none" stroke="#c5c2b3" />
    </svg>
  </button>
);

const PropertiesPanel = () => (
  <aside className="flex w-[300px] shrink-0 flex-col bg-[#f0f0ec] pl-1">
    <div className="relative flex min-h-0 flex-1 flex-col border border-[#aca899] bg-[#ece9d8] px-[2px] pb-[2px]">
      <div className={clsx("-mx-[2px] flex h-5 shrink-0 items-center border-b border-[#cfccbb] px-[3px]", BAR)}>
        <Icon name="properties" />
        <span className="ml-[2px] flex-1">Properties</span>
        <button type="button" aria-label="Pin" className="mr-3">
          <svg viewBox="0 0 8 9" className="h-[9px] w-2">
            <path d="M2 0h4v5H2zM5 0v5M0 5.500h8M4 6v3" fill="none" stroke="#000" />
          </svg>
        </button>
        <button type="button" aria-label="Close panel" className="mr-1">
          <svg viewBox="0 0 8 8" className="h-2 w-2">
            <path d="M0 0l8 8M8 0L0 8" stroke="#000" strokeWidth="2" />
          </svg>
        </button>
      </div>
      <div className="mt-[2px] flex h-[21px] shrink-0 border border-t-[#716f64] border-r-[#f7f5ea] border-b-[#f7f5ea] border-l-[#716f64] bg-white">
        <select aria-label="Component" className="min-w-0 flex-1 appearance-none bg-white pl-[2px] outline-none">
          <option>Report : Report</option>
        </select>
        <span className={clsx("flex w-[17px] items-center justify-center", BEVEL)}>
          <Down />
        </span>
      </div>
      <div className="flex h-[25px] shrink-0 items-center gap-px pt-px pl-[2px]">
        <Tools items="categories sortAz | list bolt | propPage" />
      </div>
      <div className="min-h-0 flex-1 border border-[#aca899] bg-white">
        <PropertyTable />
      </div>
      <div className="mt-[3px] h-[60px] shrink-0 border border-[#aca899] px-1 pt-[3px] leading-[15px]">
        <div className="font-bold">Globalization Strings</div>
        <p className="whitespace-nowrap">Gets a collection which consists of globalization strings.</p>
      </div>
      {/* Highlight frames over the report selector and the edited property */}
      <div className="pointer-events-none absolute top-3 -right-px -left-[6px] h-9 border-[3px] border-[#ff0000]" />
      <div className="pointer-events-none absolute top-80 -right-px left-1 h-[25px] border-[3px] border-[#ff0000]" />
    </div>
    <div role="tablist" className="flex h-[23px] shrink-0 pl-1">
      <PanelTab icon="properties" label="Properties" active />
      <PanelTab icon="dictionary" label="Dictionary" />
      <PanelTab icon="reportTree" label="Report Tree" />
    </div>
  </aside>
);

const cultures = [
  "Afrikaans [af]", "Albanian [sq]", "Arabic [ar]", "Armenian [hy]", "Azeri [az]", "Basque [eu]",
  "Belarusian [be]", "Bulgarian [bg]", "Catalan [ca]", "Chinese (Simplified) [zh-CHS]",
  "Chinese (Traditional) [zh-CHT]", "Croatian [hr]", "Czech [cs]", "Danish [da]", "Divehi [div]",
  "Dutch [nl]", "English [en]", "Estonian [et]", "Faeroese [fo]", "Farsi [fa]",
];

const tree = [
  ["table", "Data Sources"],
  ["sys", "System Variables"],
  ["fx", "Functions"],
  ["sigma", "Totals"],
  ["format", "Format"],
];

const CloseBox = ({ className }: { className: string }) => (
  <button
    type="button"
    aria-label="Close window"
    className={clsx("flex h-[21px] w-[21px] items-center justify-center rounded-[3px] border", className)}
  >
    <svg viewBox="0 0 11 11" className="h-[11px] w-[11px]">
      <path d="M1 1l9 9M10 1L1 10" stroke="#fff" strokeWidth="2" />
    </svg>
  </button>
);

const SUNKEN = "border-t-2 border-l-2 border-r border-b border-t-[#85817a] border-l-[#85817a] border-r-[#f7f5ea] border-b-[#f7f5ea] bg-white";

const LunaButton = ({ up }: { up?: boolean }) => (
  <button
    type="button"
    aria-label={up ? "Previous cultures" : "Next cultures"}
    className="flex h-4 items-center justify-center rounded-[2px] border border-[#b0c4f3] bg-[#c3d3fb]"
  >
    <svg viewBox="0 0 9 6" className={clsx("h-[6px] w-[9px]", up && "rotate-180")}>
      <path d="M1 1l3.500 3.500L8 1" fill="none" stroke="#4d6185" strokeWidth="2" />
    </svg>
  </button>
);

const CultureDialog = () => (
  <div
    role="dialog"
    aria-label="Globalization Editor"
    className="absolute top-1/2 left-1/2 mt-[2px] flex h-28 w-80 -translate-1/2 flex-col rounded-t-lg border-x-[3px] border-b-[3px] border-[#0a33cf] border-b-[#0519a0] bg-[#0a5af0]"
  >
    <div className="flex h-7 shrink-0 items-center justify-between rounded-t-md bg-gradient-to-b from-[#1c6cf4] via-[#0454e6] to-[#0464fb] pt-[2px] pr-[2px] pl-[3px]">
      <span className="text-[13px] font-bold text-white [text-shadow:1px_1px_#0b2a85]">Globalization Editor</span>
      <CloseBox className="border-white/80 bg-gradient-to-br from-[#ee8a66] to-[#cf3c16]" />
    </div>
    <div className="flex flex-1 flex-col bg-[#ece9d8]">
      <div className="flex h-[41px] items-start justify-between border-b border-[#aca899] pt-[9px] pr-3 pl-[10px]">
        <label htmlFor="culture-name" className="pt-1">Name</label>
        <div className="relative w-[182px]">
          <div className="flex h-[20px] border-t-2 border-l-2 border-[#716f64] bg-white">
            <input id="culture-name" type="text" className="min-w-0 flex-1 px-1 outline-none" />
            <button type="button" aria-label="Open list" className={clsx("flex w-4 items-center justify-center", BEVEL)}>
              <Down />
            </button>
          </div>
          <div className="absolute top-[21px] left-0 z-10 flex w-[184px] border border-black bg-white">
            <ul role="listbox" aria-label="Cultures" className="flex-1 pl-[2px] leading-[13px] whitespace-nowrap">
              {cultures.map((culture) => (
                <li key={culture} role="option" aria-selected={false}>
                  {culture}
                </li>
              ))}
            </ul>
            <div className="flex w-4 shrink-0 flex-col bg-[#f5f4ef]">
              <LunaButton up />
              <div className="mt-[2px] flex h-[66px] items-center justify-center rounded-[2px] border border-[#9db5ec] bg-[#c6d5fc]">
                <span className="h-[7px] w-[6px] bg-[repeating-linear-gradient(#f0f5ff_0_1px,#9cb4ee_1px_2px)]" />
              </div>
              <div className="flex-1" />
              <LunaButton />
            </div>
          </div>
        </div>
      </div>
      <div className="flex flex-1 justify-end border-t border-white pt-[7px] pr-2">
        <button type="button" aria-label="Cancel" className={clsx("h-[23px] w-[75px]", BEVEL)} />
      </div>
    </div>
  </div>
);

const EditorWindow = () => (
  <div className="pointer-events-none absolute inset-x-0 top-0 bottom-[30px] flex items-center justify-center">
    <div
      role="dialog"
      aria-label="Globalization Editor"
      className="pointer-events-auto relative flex h-[440px] w-[712px] flex-col rounded-t-lg border-x-4 border-b-4 border-[#7188de] border-b-[#5b68c6] bg-[#7b97e2]"
    >
      <div className="flex h-[30px] shrink-0 items-center justify-between rounded-t-md bg-gradient-to-b from-[#8ea9ec] via-[#7a96e0] to-[#84a3ea] pt-[2px] pr-[2px] pl-[2px]">
        <span className="flex items-center gap-[3px] text-[13px] font-bold text-[#d8e4f8]">
          <Icon name="app" />
          Globalization Editor
        </span>
        <CloseBox className="border-white/50 bg-[#bd7284]" />
      </div>
      <div className={clsx("flex h-7 shrink-0 items-center border-b border-[#cfccbb] pt-px pr-[3px]", BAR)}>
        <Grip />
        <button type="button" className="ml-px flex h-[20px] w-[87px] items-center gap-1 border border-[#4577c9] bg-[#b5bfcb] pl-[3px]">
          <Icon name="addCulture" />
          <span><u>A</u>dd Culture</span>
        </button>
        <button type="button" className="ml-[5px] flex h-[20px] items-center gap-[6px]">
          <Icon name="cross" />
          <span><u>R</u>emove Culture</span>
        </button>
        <span className="ml-[10px] h-[17px] w-[2px] border-r border-white bg-[#b7b5a8]" />
        <button type="button" className="ml-[10px]">Close</button>
        <label htmlFor="auto-localize" className="ml-auto pt-px pr-[6px]">Auto Localize Report on Run</label>
        <div className="relative flex h-[21px] w-[72px] border border-[#aca899] bg-white">
          <select id="auto-localize" className="min-w-0 flex-1 appearance-none bg-transparent pl-1 outline-none">
            <option>No</option>
          </select>
          <span className="pointer-events-none flex w-[18px] items-center justify-center border-l border-[#aca899] bg-[#f3f2e9]">
            <Down />
          </span>
        </div>
      </div>
      <div className="flex min-h-0 flex-1 gap-[6px] bg-[#ece9d8] pt-px pr-[2px] pb-[2px]">
        <div className={clsx("w-[83px]", SUNKEN)} />
        <div className={clsx("w-[127px]", SUNKEN)} />
        <div className={clsx("flex-1", SUNKEN)} />
        <div className={clsx("flex w-[175px] flex-col", SUNKEN)}>
          <ul role="tree" className="flex-1 pl-[3px]">
            {tree.map(([icon, label], i) => (
              <li key={label} role="treeitem" className="relative flex h-4 items-center">
                {i > 0 && <i className="absolute -top-1 left-1 h-2 border-l border-dotted border-[#aca899]" />}
                <Expander plus className="text-[#aca899]" />
                <i className="mx-px w-[5px] border-t border-dotted border-[#aca899]" />
                <Icon name={icon} />
                <span className="ml-[5px]">{label}</span>
              </li>
            ))}
          </ul>
          <div className="flex h-4 bg-[#f6f4ec]">
            <button type="button" aria-label="Scroll left" className={clsx("flex w-4 items-center justify-center", BEVEL)}>
              <Down className="rotate-90" />
            </button>
            <div className={clsx("w-[17px]", BEVEL)} />
            <div className="flex-1" />
            <button type="button" aria-label="Scroll right" className={clsx("flex w-4 items-center justify-center", BEVEL)}>
              <Down className="-rotate-90" />
            </button>
          </div>
        </div>
      </div>
      <CultureDialog />
    </div>
  </div>
);

const quickLaunch = [
  "winBox", "blueDots", "padlock", "clover", "ie", "firefox", "winBox", "winBox", "ae",
  "winamp", "merge", "vsA", "vsA", "vsB", "vsB", "cogs", "blank",
];

const tasks = [
  { icon: "winamp", label: "39. яюN - яюS - Win..." },
  { icon: "floppy", label: "Total Commander 6.0..." },
  { icon: "firefox", label: "Custom UI Culture In ..." },
  { icon: "merge", label: "WinMerge - [Stimulso..." },
  { icon: "demo", label: "Demo", active: true },
];

const Taskbar = () => (
  <footer className="flex h-[30px] shrink-0 bg-gradient-to-b from-[#4c90f2] via-[#245edb] via-15% to-[#1f55cf] text-white">
    <button
      type="button"
      className="flex w-[97px] items-center gap-[5px] rounded-r-xl bg-gradient-to-b from-[#6bb567] via-[#3c9a3c] via-25% to-[#2f7f2e] pl-[10px] text-[16px] font-bold italic [text-shadow:1px_1px_1px_#1d4a1c]"
    >
      <svg viewBox="0 0 18 18" className="h-5 w-5" aria-hidden="true">
        <path d="M4 2c2-1 3-1 5 0L7 8C5 7 4 7 2 8z" fill="#e8562a" />
        <path d="M10 3c2 1 3 1 6 0l-2 6c-2 1-4 1-6 0z" fill="#84c441" />
        <path d="M2 9c2-1 3-1 5 0l-2 6c-2-1-3-1-5 0z" fill="#4a87ea" />
        <path d="M8 10c2 1 3 1 6 0l-2 6c-2 1-4 1-6 0z" fill="#fbc92f" />
      </svg>
      start
    </button>
    <div className="flex items-center gap-[7px] pl-3">
      {quickLaunch.map((name, i) => (
        <button key={i} type="button" aria-label={name}>
          <Icon name={name} />
        </button>
      ))}
    </div>
    <div className="flex flex-1 items-center gap-[2px] pl-[27px]">
      {tasks.map((task) => (
        <button
          key={task.label}
          type="button"
          className={clsx(
            "flex h-6 w-[158px] items-center gap-[3px] rounded-[3px] border pl-2",
            task.active ? "border-[#163a8c] bg-[#1e50b8]" : "border-[#4f93f7] border-b-[#2a62cc] bg-[#3b80ef]"
          )}
        >
          <Icon name={task.icon} />
          {task.label}
        </button>
      ))}
    </div>
    <span className="mr-3 self-center bg-[#316ac5]">EN</span>
    <div className="flex w-[146px] items-center gap-[2px] border-l border-[#0c3d94] bg-gradient-to-b from-[#3ab8f5] via-[#1291ea] via-15% to-[#0f80d8]">
      <button
        type="button"
        aria-label="Show hidden icons"
        className="-ml-[9px] flex h-[18px] w-[18px] items-center justify-center rounded-full border border-[#8cc4f8] bg-[#2f8be8]"
      >
        <svg viewBox="0 0 6 8" className="h-2 w-[6px]">
          <path d="M5 0L1 4l4 4" fill="none" stroke="#fff" strokeWidth="2" />
        </svg>
      </button>
      {["ball", "network", "kav", "globe", "shield"].map((name) => (
        <Icon key={name} name={name} />
      ))}
      <span className="ml-1">14:26</span>
    </div>
  </footer>
);

const CAPTION = "flex h-[21px] w-[21px] items-center justify-center rounded-[3px] border border-white/60";

const App: React.FC = () => {
  return (
    <div className="relative flex h-screen flex-col overflow-hidden bg-[#ece9d8] font-['Liberation_Sans',sans-serif] text-[11px] leading-[13px] text-black">
      <header className="flex h-[26px] shrink-0 items-center gap-[3px] bg-gradient-to-b from-[#9cb7f0] via-[#7b97e2] to-[#8aa8ec] px-[2px] text-[13px] font-bold text-[#d8e4f8]">
        <Icon name="app" />
        <h1 className="flex-1">Report.mrt - Designer</h1>
        <div className="flex gap-[2px]">
          <button type="button" aria-label="Minimize" className={clsx(CAPTION, "bg-[#4a72dc]")}>
            <span className="mt-2 mr-1 h-[3px] w-[7px] bg-white" />
          </button>
          <button type="button" aria-label="Restore" className={clsx(CAPTION, "bg-[#4a72dc]")}>
            <svg viewBox="0 0 11 11" className="h-[11px] w-[11px]">
              <path d="M3.500 3V1h7v6H8M.500 4.500h7v6h-7zM3 1.500h8M0 4.500h8" fill="none" stroke="#fff" strokeWidth="1.300" />
            </svg>
          </button>
          <button type="button" aria-label="Close" className={clsx(CAPTION, "bg-[#bd7284]")}>
            <svg viewBox="0 0 11 11" className="h-[11px] w-[11px]">
              <path d="M1 1l9 9M10 1L1 10" stroke="#fff" strokeWidth="2" />
            </svg>
          </button>
        </div>
      </header>

      <nav className="flex h-[19px] shrink-0 items-center gap-[10px] pl-[5px] text-[#aca899]">
        {["File", "Edit", "View", "Tools", "Help"].map((item) => (
          <button key={item} type="button">
            {item}
          </button>
        ))}
      </nav>

      <TopBars />

      <main className="flex min-h-0 flex-1">
        <Toolbox />
        <div className="flex min-w-0 flex-1 flex-col">
          <div role="tablist" className="relative -mb-px flex h-[27px] shrink-0 items-end pl-[7px]">
            <DocTab icon="page" label="Page1" width="w-[60px]" active />
            <DocTab icon="code" label="Code" width="w-[55px]" />
            <DocTab icon="preview" label="Preview" width="w-[68px]" />
            <DocTab icon="htmlPreview" label="HTML Preview" width="w-[100px]" />
          </div>
          <Canvas />
          <div className="flex h-[23px] shrink-0 items-end bg-[#f0f0ec]">
            <button
              type="button"
              className="flex h-[20px] w-[76px] items-center gap-px border border-b-0 border-[#aca899] bg-[#f1efe4] text-[#716f64]"
            >
              <Icon name="messages" />
              Messages
            </button>
          </div>
        </div>
        <PropertiesPanel />
      </main>

      <div className="relative flex h-6 shrink-0 gap-[3px] pt-[2px] pb-px text-center leading-[20px]">
        {[
          ["Centimeters", "w-[99px]"],
          ["Report", "w-[46px]"],
          ["X:17,76  Y:1,54", "w-[196px]"],
        ].map(([text, width]) => (
          <span
            key={text}
            className={clsx(
              "border border-t-[#aca899] border-r-white border-b-white border-l-[#aca899] whitespace-pre",
              width
            )}
          >
            {text}
          </span>
        ))}
        <svg viewBox="0 0 12 12" className="ml-auto h-3 w-3 self-end" aria-hidden="true">
          <path d="M0 12L12 0M4 12l8-8M8 12l4-4" stroke="#aca899" strokeWidth="1.500" />
        </svg>
      </div>

      <Taskbar />
      <EditorWindow />
    </div>
  );
};

export default App;
